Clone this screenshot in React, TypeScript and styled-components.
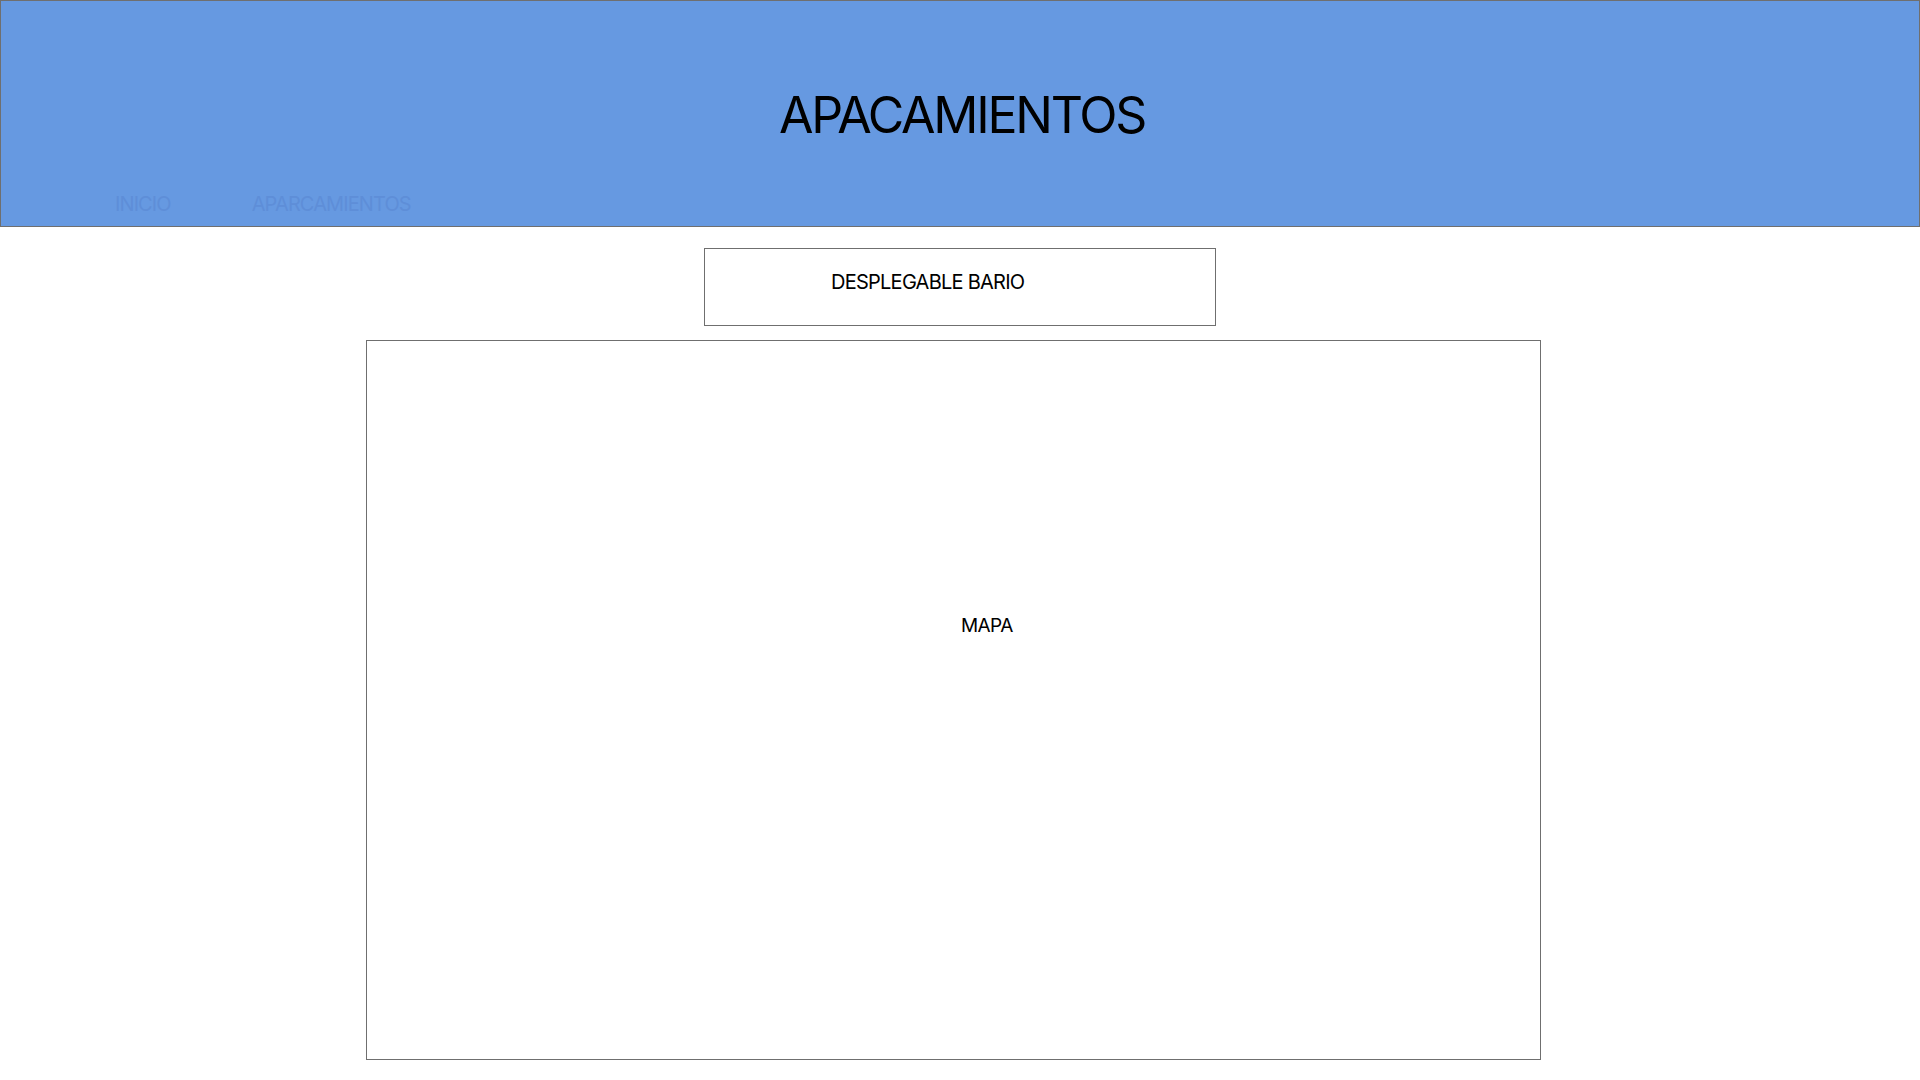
import React from "react";
import styled, { createGlobalStyle } from "styled-components";

const GlobalStyle = createGlobalStyle`
  html, body {
    margin: 0;
    padding: 0;
    background: #ffffff;
    font-family: Inter, "Noto Sans", "Liberation Sans", sans-serif;
    color: #000000;
  }
`;

const Page = styled.div`
  width: 1920px;
  min-height: 1080px;
  display: flex;
  flex-direction: column;
`;

const Header = styled.header`
  box-sizing: border-box;
  height: 227px;
  background: #6699e1;
  border: 1px solid #6f6f6f;
  display: flex;
  flex-direction: column;
`;

const Title = styled.h1`
  margin: 84px 0 0;
  font-size: 50px;
  font-weight: 400;
  line-height: normal;
  letter-spacing: -2.25px;
  text-align: center;
  padding-left: 4px;
`;

const Nav = styled.nav`
  margin-top: 47px;
  display: flex;
  gap: 81px;
  padding-left: 114px;
`;

const NavItem = styled.span`
  font-size: 20px;
  line-height: normal;
  letter-spacing: -0.9px;
  color: #5e8ed8;
`;

const Main = styled.main`
  display: flex;
  flex-direction: column;
`;

const Dropdown = styled.div`
  box-sizing: border-box;
  width: 512px;
  height: 78px;
  margin: 21px 0 0 704px;
  border: 1px solid #6f6f6f;
  padding: 21px 0 0 126px;
  font-size: 20px;
  line-height: normal;
  letter-spacing: -0.75px;
`;

const MapBox = styled.div`
  box-sizing: border-box;
  width: 1175px;
  height: 720px;
  margin: 14px 0 0 366px;
  border: 1px solid #6f6f6f;
  padding: 273px 0 0 594px;
  font-size: 19px;
  line-height: normal;
  letter-spacing: -0.6px;
`;

export default function App() {
  return (
    <>
      <GlobalStyle />
      <Page>
        <Header>
          <Title>APACAMIENTOS</Title>
          <Nav>
            <NavItem>INICIO</NavItem>
            <NavItem>APARCAMIENTOS</NavItem>
          </Nav>
        </Header>
        <Main>
          <Dropdown>DESPLEGABLE BARIO</Dropdown>
          <MapBox>MAPA</MapBox>
        </Main>
      </Page>
    </>
  );
}
